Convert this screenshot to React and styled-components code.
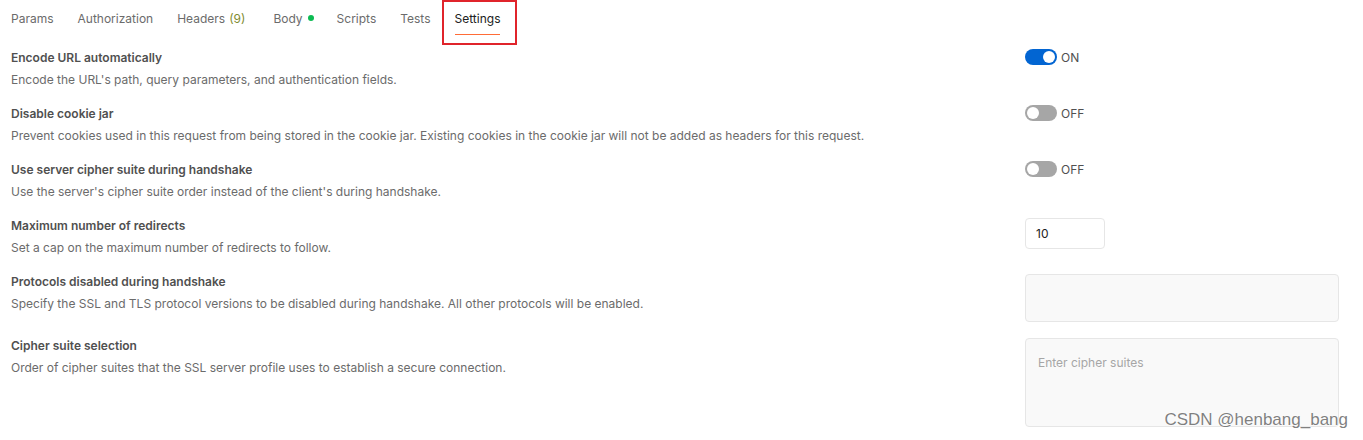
import React from "react";
import styled, { createGlobalStyle } from "styled-components";

const Global = createGlobalStyle`
  html, body { margin: 0; padding: 0; background: #ffffff; }
  body { font-family: Inter, "Noto Sans", sans-serif; -webkit-font-smoothing: antialiased; }
  * { box-sizing: border-box; }
`;

const Page = styled.div`
  position: relative;
  width: 1363px;
  height: 440px;
  overflow: hidden;
  background: #fff;
`;

const TabBar = styled.div`
  display: flex;
  align-items: flex-start;
  gap: 24px;
  height: 41px;
  padding-left: 11px;
`;

const Tab = styled.div`
  position: relative;
  display: flex;
  align-items: center;
  height: 36px;
  font-size: 12px;
  color: ${(p) => (p.$active ? "#212121" : "#6b6b6b")};
  white-space: nowrap;
`;

const Underline = styled.span`
  position: absolute;
  left: 0;
  right: 0;
  top: 34px;
  height: 1px;
  background: #ff6c37;
`;

const Count = styled.span`
  color: #7f8c30;
  margin-left: 4px;
  margin-right: 4px;
`;

const Dot = styled.span`
  width: 6px;
  height: 6px;
  border-radius: 50%;
  background: #0cbb52;
  margin-left: 5px;
  margin-right: -1px;
`;

const Highlight = styled.div`
  position: absolute;
  left: -13px;
  right: -17px;
  top: 0;
  height: 45px;
  border: 2px solid #e0242b;
  pointer-events: none;
`;

const List = styled.div`
  display: flex;
  flex-direction: column;
`;

const Row = styled.div`
  display: flex;
  justify-content: space-between;
  align-items: flex-start;
  padding: 9px 24px 9px 11px;
`;

const Info = styled.div`
  display: flex;
  flex-direction: column;
  gap: 6px;
`;

const Title = styled.div`
  font-size: 12px;
  line-height: 16px;
  font-weight: 600;
  color: #505050;
`;

const Desc = styled.div`
  font-size: 12px;
  line-height: 16px;
  color: #6b6b6b;
`;

const Control = styled.div`
  width: 314px;
  display: flex;
  align-items: center;
`;

const ToggleWrap = styled.div`
  display: flex;
  align-items: center;
  gap: 4px;
  height: 16px;
  margin-top: -1px;
`;

const Track = styled.div`
  position: relative;
  width: 32px;
  height: 16px;
  border-radius: 8px;
  background: ${(p) => (p.$on ? "#0265d2" : "#a6a6a6")};
`;

const Knob = styled.div`
  position: absolute;
  top: 2px;
  left: ${(p) => (p.$on ? "18px" : "2px")};
  width: 12px;
  height: 12px;
  border-radius: 50%;
  background: #fff;
`;

const ToggleLabel = styled.span`
  font-size: 12px;
  color: #505050;
`;

const NumberBox = styled.div`
  width: 80px;
  height: 31px;
  border: 1px solid #e6e6e6;
  border-radius: 4px;
  background: #fff;
  display: flex;
  align-items: center;
  padding-left: 10px;
  font-size: 12px;
  color: #212121;
`;

const AreaBox = styled.div`
  margin-bottom: ${(p) => p.$mb || 0}px;
  width: 314px;
  height: ${(p) => p.$h}px;
  border: 1px solid #e6e6e6;
  border-radius: 4px;
  background: #f9f9f9;
  padding: 16px 12px;
  font-size: 12px;
  line-height: 16px;
  color: #a6a6a6;
`;

const Watermark = styled.div`
  position: absolute;
  right: 15px;
  bottom: 10px;
  font-family: "Liberation Sans", Arial, sans-serif;
  font-size: 17px;
  line-height: 20px;
  color: rgba(105, 105, 105, 0.85);
  text-shadow: 0 0 2px #fff;
  pointer-events: none;
`;

function Toggle({ on }) {
  return (
    <ToggleWrap>
      <Track $on={on}>
        <Knob $on={on} />
      </Track>
      <ToggleLabel>{on ? "ON" : "OFF"}</ToggleLabel>
    </ToggleWrap>
  );
}

const rows = [
  {
    title: "Encode URL automatically",
    desc: "Encode the URL's path, query parameters, and authentication fields.",
    control: <Toggle on />,
  },
  {
    title: "Disable cookie jar",
    desc: "Prevent cookies used in this request from being stored in the cookie jar. Existing cookies in the cookie jar will not be added as headers for this request.",
    control: <Toggle />,
  },
  {
    title: "Use server cipher suite during handshake",
    desc: "Use the server's cipher suite order instead of the client's during handshake.",
    control: <Toggle />,
  },
  {
    title: "Maximum number of redirects",
    desc: "Set a cap on the maximum number of redirects to follow.",
    control: <NumberBox>10</NumberBox>,
  },
  {
    title: "Protocols disabled during handshake",
    desc: "Specify the SSL and TLS protocol versions to be disabled during handshake. All other protocols will be enabled.",
    control: <AreaBox $h={48} $mb={-2} />,
  },
  {
    title: "Cipher suite selection",
    desc: "Order of cipher suites that the SSL server profile uses to establish a secure connection.",
    control: <AreaBox $h={89}>Enter cipher suites</AreaBox>,
  },
];

export default function App() {
  return (
    <Page>
      <Global />
      <TabBar>
        <Tab>Params</Tab>
        <Tab>Authorization</Tab>
        <Tab>
          Headers<Count>(9)</Count>
        </Tab>
        <Tab>
          Body<Dot />
        </Tab>
        <Tab>Scripts</Tab>
        <Tab>Tests</Tab>
        <Tab $active>
          Settings
          <Underline />
          <Highlight />
        </Tab>
      </TabBar>
      <List>
        {rows.map((r) => (
          <Row key={r.title}>
            <Info>
              <Title>{r.title}</Title>
              <Desc>{r.desc}</Desc>
            </Info>
            <Control>{r.control}</Control>
          </Row>
        ))}
      </List>
      <Watermark>CSDN @henbang_bang</Watermark>
    </Page>
  );
}
